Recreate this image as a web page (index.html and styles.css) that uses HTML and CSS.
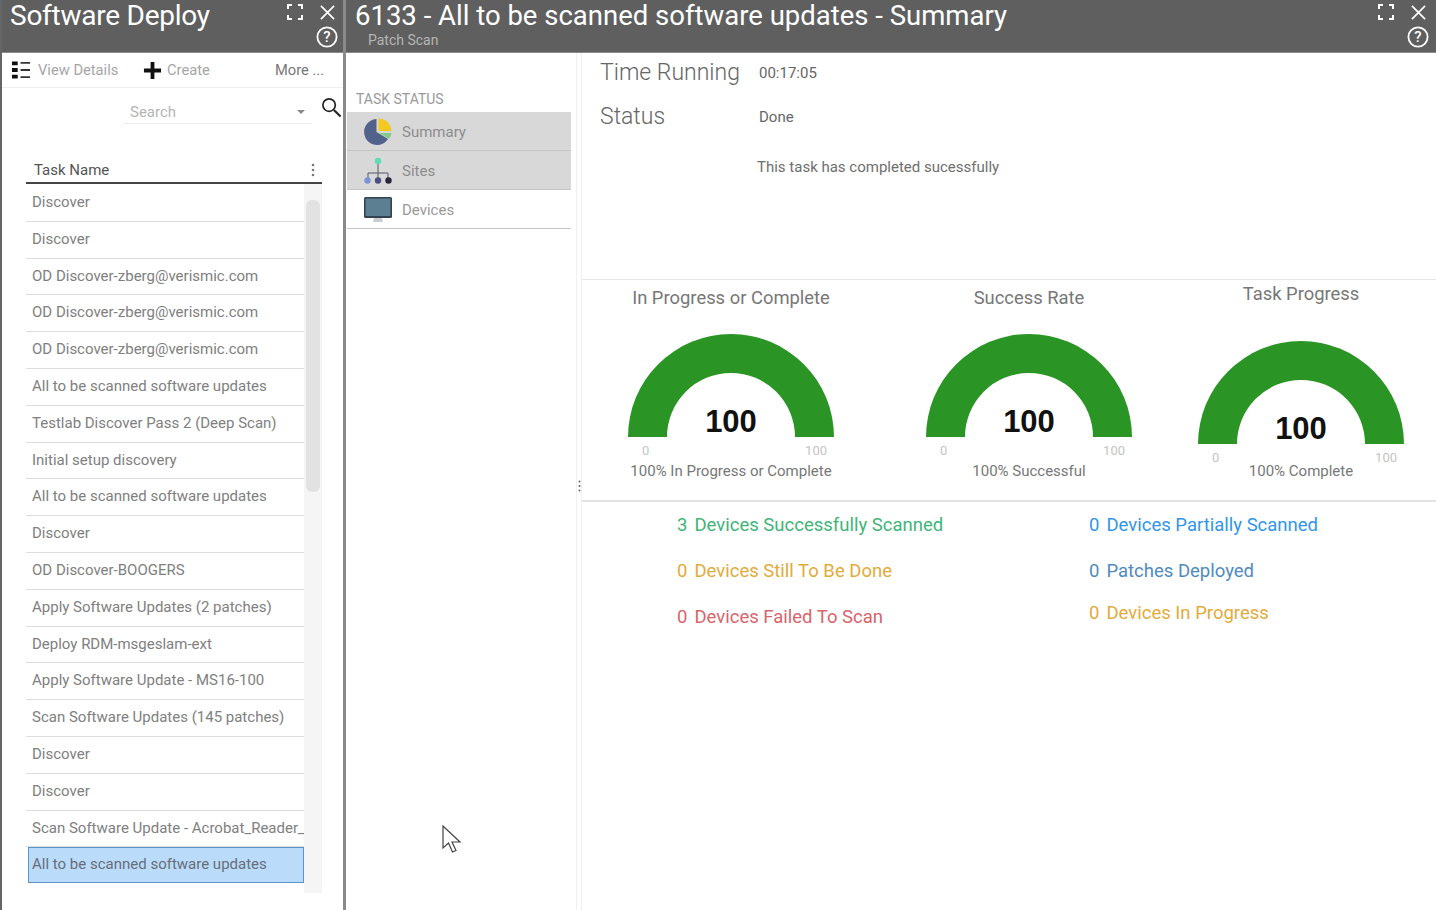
FILE: index.html
```html
<!DOCTYPE html>
<html lang="en">
<head>
  <meta charset="UTF-8">
  <title>Software Deploy</title>
  <link rel="stylesheet" href="styles.css">
</head>
<body>

  <!-- Left panel: task list -->
  <div class="panel-left">
    <div class="header">
      <div class="titles">
        <h1 class="title-left">Software Deploy</h1>
      </div>
      <div class="win-icons icons-left">
        <svg class="ico-max" viewBox="0 0 16 16"><path d="M1 5V1h4M11 1h4v4M15 11v4h-4M5 15H1v-4" fill="none" stroke="#fff" stroke-width="2"/></svg>
        <svg class="ico-close" viewBox="0 0 16 16"><path d="M1 1l14 14M15 1L1 15" fill="none" stroke="#fff" stroke-width="1.800"/></svg>
        <svg class="ico-help" viewBox="0 0 22 22"><circle cx="11" cy="11" r="9.600" fill="none" stroke="#fff" stroke-width="1.800"/><text x="11" y="16" text-anchor="middle" class="help-mark">?</text></svg>
      </div>
    </div>

    <div class="toolbar">
      <div class="tool tool-view">
        <svg class="ico-list" viewBox="0 0 20 18"><path d="M0 0h6v4H0zM0 7h6v4H0zM0 14h6v4H0z" fill="#111"/><path d="M9 1.500h10M9 9h10M9 16.500h10" stroke="#333" stroke-width="2"/></svg>
        <span>View Details</span>
      </div>
      <div class="tool tool-create">
        <svg class="ico-plus" viewBox="0 0 20 20"><path d="M10 1v18M1 10h18" stroke="#111" stroke-width="4"/></svg>
        <span>Create</span>
      </div>
      <div class="tool tool-more">More ...</div>
    </div>

    <div class="search-row">
      <div class="search-box">
        <span>Search</span>
        <i class="caret"></i>
      </div>
      <svg class="ico-search" viewBox="0 0 22 22"><circle cx="8.500" cy="8.500" r="6.500" fill="none" stroke="#222" stroke-width="1.800"/><path d="M13.500 13.500l7 7" stroke="#222" stroke-width="2.200"/></svg>
    </div>

    <div class="table-head">
      <span>Task Name</span>
      <svg class="ico-dots" viewBox="0 0 4 14"><circle cx="2" cy="2" r="1.300"/><circle cx="2" cy="7" r="1.300"/><circle cx="2" cy="12" r="1.300"/></svg>
    </div>

    <div class="table-wrap">
      <ul class="task-list">
        <li>Discover</li>
        <li>Discover</li>
        <li>OD Discover-zberg@verismic.com</li>
        <li>OD Discover-zberg@verismic.com</li>
        <li>OD Discover-zberg@verismic.com</li>
        <li>All to be scanned software updates</li>
        <li>Testlab Discover Pass 2 (Deep Scan)</li>
        <li>Initial setup discovery</li>
        <li>All to be scanned software updates</li>
        <li>Discover</li>
        <li>OD Discover-BOOGERS</li>
        <li>Apply Software Updates (2 patches)</li>
        <li>Deploy RDM-msgeslam-ext</li>
        <li>Apply Software Update - MS16-100</li>
        <li>Scan Software Updates (145 patches)</li>
        <li>Discover</li>
        <li>Discover</li>
        <li>Scan Software Update - Acrobat_Reader_</li>
        <li class="selected">All to be scanned software updates</li>
      </ul>
      <div class="scrollbar"><div class="thumb"></div></div>
    </div>
  </div>

  <!-- Right panel: task summary -->
  <div class="panel-main">
    <div class="header">
      <div class="titles">
        <h1 class="title-main">6133 - All to be scanned software updates - Summary</h1>
        <p class="subtitle">Patch Scan</p>
      </div>
      <div class="win-icons">
        <svg class="ico-max" viewBox="0 0 16 16"><path d="M1 5V1h4M11 1h4v4M15 11v4h-4M5 15H1v-4" fill="none" stroke="#fff" stroke-width="2"/></svg>
        <svg class="ico-close" viewBox="0 0 16 16"><path d="M1 1l14 14M15 1L1 15" fill="none" stroke="#fff" stroke-width="1.800"/></svg>
        <svg class="ico-help" viewBox="0 0 22 22"><circle cx="11" cy="11" r="9.600" fill="none" stroke="#fff" stroke-width="1.800"/><text x="11" y="16" text-anchor="middle" class="help-mark">?</text></svg>
      </div>
    </div>

    <div class="main-body">
      <div class="side-nav">
        <div class="nav-title">TASK STATUS</div>
        <div class="nav-item grey">
          <svg class="nav-ico" viewBox="0 0 28 28">
            <path d="M12.500 1A13 13 0 1 0 24 21L12.500 14z" fill="#53628a"/>
            <path d="M14.500 0.500A13 13 0 0 1 27.500 13H14.500z" fill="#f3c91f"/>
            <path d="M15 15h12.500A13 13 0 0 1 25 21z" fill="#86c98c"/>
          </svg>
          <span>Summary</span>
        </div>
        <div class="nav-item grey">
          <svg class="nav-ico" viewBox="0 0 28 28">
            <path d="M14 6v10M4 22v-6h20v6M14 16v6" fill="none" stroke="#556" stroke-width="1"/>
            <circle cx="14" cy="4" r="3.200" fill="#5fdcb4"/>
            <circle cx="3.500" cy="23.500" r="3.200" fill="#7c93d6"/>
            <circle cx="14" cy="23.500" r="3.200" fill="#4b4f7d"/>
            <circle cx="24.500" cy="23.500" r="3.200" fill="#2c2540"/>
          </svg>
          <span>Sites</span>
        </div>
        <div class="nav-item">
          <svg class="nav-ico" viewBox="0 0 28 28">
            <path d="M10 22h8l1 4H9z" fill="#c9cdd1"/>
            <rect x="0" y="1" width="28" height="21" rx="1.500" fill="#33424f"/>
            <rect x="1.500" y="2.500" width="25" height="17.500" fill="#5c7f92"/>
          </svg>
          <span>Devices</span>
        </div>
      </div>

      <div class="splitter">
        <svg class="ico-grip" viewBox="0 0 3 12"><circle cx="1.500" cy="1.500" r="1"/><circle cx="1.500" cy="6" r="1"/><circle cx="1.500" cy="10.500" r="1"/></svg>
      </div>

      <div class="content">
        <div class="info">
          <div class="info-row row-time">
            <span class="info-label">Time Running</span>
            <span class="info-value">00:17:05</span>
          </div>
          <div class="info-row row-status">
            <span class="info-label">Status</span>
            <span class="info-value">Done</span>
          </div>
          <p class="info-msg">This task has completed sucessfully</p>
        </div>

        <div class="gauges">
          <div class="gauge gauge-1">
            <h3>In Progress or Complete</h3>
            <svg class="arc" viewBox="0 0 208 104"><path d="M1 104A103 103 0 0 1 207 104H168A64 64 0 0 0 40 104z" fill="#2a9425"/><text x="104" y="99" text-anchor="middle" class="arc-num">100</text></svg>
            <div class="scale"><span>0</span><span>100</span></div>
            <p>100% In Progress or Complete</p>
          </div>
          <div class="gauge gauge-2">
            <h3>Success Rate</h3>
            <svg class="arc" viewBox="0 0 208 104"><path d="M1 104A103 103 0 0 1 207 104H168A64 64 0 0 0 40 104z" fill="#2a9425"/><text x="104" y="99" text-anchor="middle" class="arc-num">100</text></svg>
            <div class="scale"><span>0</span><span>100</span></div>
            <p>100% Successful</p>
          </div>
          <div class="gauge gauge-3">
            <h3>Task Progress</h3>
            <svg class="arc" viewBox="0 0 208 104"><path d="M1 104A103 103 0 0 1 207 104H168A64 64 0 0 0 40 104z" fill="#2a9425"/><text x="104" y="99" text-anchor="middle" class="arc-num">100</text></svg>
            <div class="scale"><span>0</span><span>100</span></div>
            <p>100% Complete</p>
          </div>
        </div>

        <div class="stats">
          <div class="stat-col">
            <div class="stat green"><b>3</b>Devices Successfully Scanned</div>
            <div class="stat amber"><b>0</b>Devices Still To Be Done</div>
            <div class="stat red"><b>0</b>Devices Failed To Scan</div>
          </div>
          <div class="stat-col col-right">
            <div class="stat blue"><b>0</b>Devices Partially Scanned</div>
            <div class="stat steel"><b>0</b>Patches Deployed</div>
            <div class="stat amber"><b>0</b>Devices In Progress</div>
          </div>
        </div>
      </div>
    </div>
  </div>

  <!-- Mouse pointer -->
  <svg class="pointer" viewBox="0 0 20 28"><path d="M1 1v22l5.500-5 4 9 3.500-1.500-4-8.500h8z" fill="#fff" stroke="#444" stroke-width="1.200"/></svg>

</body>
</html>
```

FILE: styles.css
```css
* {
  box-sizing: border-box;
  margin: 0;
  padding: 0;
}

body {
  font-family: Roboto, "Liberation Sans", sans-serif;
  background: #fff;
  display: flex;
  width: 1436px;
  height: 910px;
  overflow: hidden;
  position: relative;
  color: #777;
}

/* Cabecalho dos paineis */
.header {
  height: 53px;
  background: #5f5f5f;
  border-bottom: 1px solid #8a8a8a;
  display: flex;
  justify-content: space-between;
  flex-shrink: 0;
}

h1 {
  font-weight: 400;
  color: #fff;
  white-space: nowrap;
}

.title-left {
  font-size: 28px;
  line-height: 32px;
  padding-left: 8px;
  letter-spacing: -0.25px;
}

.title-main {
  font-size: 27.5px;
  line-height: 32px;
  padding-left: 9px;
}

.subtitle {
  font-size: 14px;
  color: #b5b5b5;
  padding-left: 22px;
  line-height: 16px;
}

.win-icons {
  display: grid;
  grid-template-columns: 32px 32px;
  grid-template-rows: 24px 26px;
  justify-items: center;
  align-items: center;
  padding-right: 2px;
}

.icons-left {
  padding-right: 0;
}

.ico-max {
  width: 16px;
  height: 16px;
}

.ico-close {
  width: 15px;
  height: 15px;
}

.ico-help {
  width: 22px;
  height: 22px;
  grid-column: 2;
  grid-row: 2;
}

.help-mark {
  font-size: 15px;
  font-weight: 500;
  fill: #fff;
}

/* Painel esquerdo */
.panel-left {
  width: 346px;
  flex-shrink: 0;
  border-left: 2px solid #666;
  border-right: 3px solid #8a8a8a;
  display: flex;
  flex-direction: column;
}

.toolbar {
  height: 35px;
  border-bottom: 1px solid #eee;
  display: flex;
  align-items: center;
  font-size: 14.7px;
  color: #a6a6a6;
}

.tool {
  display: flex;
  align-items: center;
}

.tool-view {
  padding-left: 10px;
  gap: 7px;
  width: 141px;
}

.ico-list {
  width: 19px;
  height: 18px;
}

.tool-create {
  gap: 5px;
  width: 132px;
}

.ico-plus {
  width: 19px;
  height: 19px;
}

.tool-more {
  color: #777;
}

.search-row {
  height: 36px;
  display: flex;
  align-items: flex-start;
  padding-top: 12px;
}

.search-box {
  margin-left: 122px;
  width: 188px;
  height: 24px;
  border-bottom: 1px solid #eee;
  padding-left: 6px;
  font-size: 15px;
  color: #b5b5b5;
  display: flex;
  justify-content: space-between;
  align-items: center;
}

.caret {
  width: 0;
  height: 0;
  border-left: 4px solid transparent;
  border-right: 4px solid transparent;
  border-top: 4px solid #888;
  margin-right: 7px;
}

.ico-search {
  width: 21px;
  height: 21px;
  margin-left: 9px;
  margin-top: -3px;
}

.table-head {
  margin: 35px 0 0 24px;
  width: 296px;
  height: 25px;
  border-bottom: 2px solid #444;
  display: flex;
  justify-content: space-between;
  align-items: center;
  padding: 0 7px 2px 8px;
  font-size: 15px;
  color: #555;
  flex-shrink: 0;
}

.ico-dots {
  width: 4px;
  height: 14px;
  fill: #777;
}

.table-wrap {
  display: flex;
  align-items: flex-start;
  margin-left: 24px;
  width: 296px;
}

.task-list {
  list-style: none;
  width: 278px;
  margin-top: 1px;
}

.task-list li {
  height: 36.8px;
  line-height: 34px;
  border-bottom: 1px solid #ddd;
  padding-left: 6px;
  font-size: 15px;
  color: #808080;
  white-space: nowrap;
}

.task-list li.selected {
  height: 36px;
  margin-left: 2px;
  padding-left: 3px;
  line-height: 33px;
  background: #bbdbfb;
  border: 1px solid #5a94cc;
  color: #666e78;
}

.scrollbar {
  width: 18px;
  height: 709px;
  background: #f5f5f5;
  padding: 16px 2px 0;
}

.thumb {
  height: 292px;
  background: #e2e2e2;
  border-radius: 6px;
}

/* Painel principal */
.panel-main {
  flex: 1;
  display: flex;
  flex-direction: column;
  min-width: 0;
}

.main-body {
  flex: 1;
  display: flex;
}

.side-nav {
  width: 224px;
  margin-left: 1px;
  padding-top: 38px;
  flex-shrink: 0;
}

.nav-title {
  font-size: 14px;
  color: #999;
  padding-left: 9px;
  height: 21px;
  line-height: 16px;
}

.nav-item {
  height: 39px;
  display: flex;
  align-items: center;
  padding: 2px 0 0 17px;
  gap: 10px;
  border-bottom: 1px solid #c4c4c4;
  font-size: 15px;
  color: #9a9a9a;
}

.nav-item.grey {
  background: #d8d8d8;
  color: #8c8c8c;
}

.nav-ico {
  width: 28px;
  height: 28px;
}

.splitter {
  width: 6px;
  margin-left: 5px;
  border-left: 1px solid #f0f0f0;
  border-right: 1px solid #f0f0f0;
  display: flex;
  flex-direction: column;
  align-items: center;
  padding-top: 427px;
  flex-shrink: 0;
}

.ico-grip {
  width: 3px;
  height: 12px;
  fill: #666;
  flex-shrink: 0;
}

.content {
  flex: 1;
  min-width: 0;
}

.info {
  height: 227px;
  border-bottom: 1px solid #e8e8e8;
  padding-left: 18px;
}

.info-row {
  display: flex;
  align-items: center;
  height: 44px;
}

.row-time {
  height: 38px;
  margin-bottom: 3px;
}

.info-label {
  font-size: 23px;
  font-weight: 300;
  color: #666;
  width: 159px;
}

.info-value {
  font-size: 15px;
  color: #666;
  padding-top: 2px;
}

.info-msg {
  font-size: 15px;
  color: #6e6e6e;
  margin: 20px 0 0 157px;
}

.gauges {
  height: 222px;
  border-bottom: 2px solid #e2e2e2;
  display: flex;
  padding-left: 45px;
}

.gauge {
  width: 208px;
  text-align: center;
  flex-shrink: 0;
}

.gauge-2 {
  margin-left: 90px;
}

.gauge-3 {
  margin-left: 64px;
}

.gauge h3 {
  font-size: 18.4px;
  font-weight: 400;
  color: #777;
  line-height: 22px;
  margin-top: 7px;
  white-space: nowrap;
}

.gauge-3 h3 {
  margin-top: 3px;
}

.arc {
  display: block;
  width: 208px;
  height: 104px;
  margin-top: 24px;
  overflow: visible;
}

.gauge-3 .arc {
  margin-top: 35px;
}

.arc-num {
  font-family: "Liberation Sans", sans-serif;
  font-size: 31px;
  font-weight: 700;
  fill: #111;
}

.scale {
  display: flex;
  justify-content: space-between;
  padding: 0 8px 0 15px;
  font-size: 13px;
  color: #c4c4c4;
  line-height: 15px;
  margin-top: 6px;
}

.gauge p {
  font-size: 15px;
  color: #777;
  white-space: nowrap;
  line-height: 18px;
  margin-top: 4px;
}

.gauge-3 p {
  margin-top: -3px;
}

.stats {
  display: flex;
  padding: 12px 0 0 95px;
}

.stat-col {
  width: 412px;
  flex-shrink: 0;
  display: flex;
  flex-direction: column;
  gap: 24px;
}

.col-right .stat:last-child {
  margin-top: -4px;
}

.stat {
  font-size: 18.5px;
  line-height: 22px;
  white-space: nowrap;
}

.stat b {
  font-weight: 400;
  margin-right: 7px;
}

.green {
  color: #3fb578;
}

.amber {
  color: #e2ab3a;
}

.red {
  color: #d9646b;
}

.blue {
  color: #2f96ea;
}

.steel {
  color: #4f8bc0;
}

.pointer {
  position: absolute;
  left: 442px;
  top: 825px;
  width: 20px;
  height: 28px;
}
```
